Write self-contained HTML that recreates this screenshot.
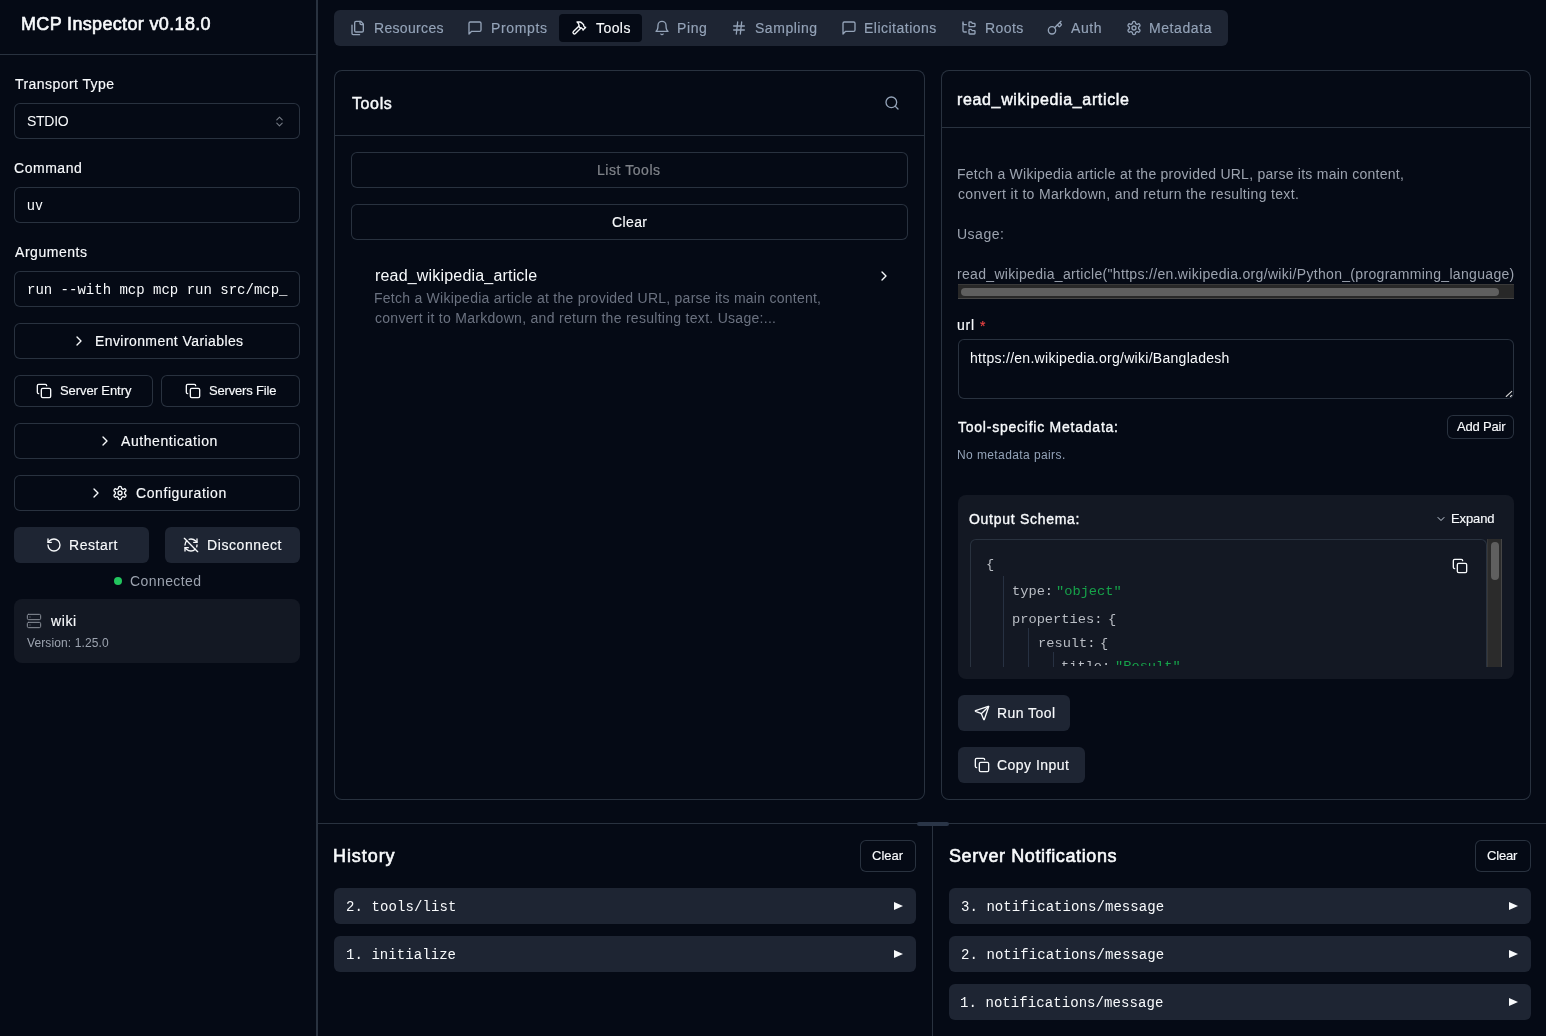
<!DOCTYPE html>
<html><head><meta charset="utf-8"><title>MCP Inspector</title>
<style>
html,body{margin:0;padding:0;}
body{width:1546px;height:1036px;overflow:hidden;background:#050a15;position:relative;font-family:'Liberation Sans', sans-serif;-webkit-font-smoothing:antialiased;}
.t{position:absolute;white-space:pre;will-change:transform;}
.r{position:absolute;box-sizing:border-box;}
.i{position:absolute;overflow:visible;}
.tri{position:absolute;width:0;height:0;border-top:4.6px solid transparent;border-bottom:4.6px solid transparent;border-left:9.5px solid #f8fafc;}
</style></head><body>
<div class="r" style="left:316px;top:0px;width:2px;height:1036px;background:#29323f;border-radius:0px;"></div>
<div class="r" style="left:0px;top:54px;width:316px;height:1px;background:#29323f;border-radius:0px;"></div>
<div class="t " id="t0" style="left:21.40px;top:13.06px;font-size:18px;font-weight:400;color:#f8fafc;font-family:'Liberation Sans', sans-serif;line-height:22px;-webkit-text-stroke:0.6px #f8fafc;letter-spacing:0.341px;">MCP Inspector v0.18.0</div>
<div class="t " id="t1" style="left:15.10px;top:74.75px;font-size:14px;font-weight:400;color:#f8fafc;font-family:'Liberation Sans', sans-serif;line-height:18px;-webkit-text-stroke:0.15px #f8fafc;letter-spacing:0.435px;">Transport Type</div>
<div class="r" style="left:14px;top:103px;width:286px;height:36px;background:#050a15;border-radius:6px;box-shadow:inset 0 0 0 1px #29323f;"></div>
<div class="t " id="t2" style="left:27.10px;top:112.15px;font-size:14px;font-weight:400;color:#f8fafc;font-family:'Liberation Sans', sans-serif;line-height:18px;letter-spacing:-0.272px;">STDIO</div>
<svg class="i" style="left:272.5px;top:114.5px;width:13px;height:13px;opacity:.75" viewBox="0 0 24 24" fill="none" stroke="#9aa0aa" stroke-width="2" stroke-linecap="round" stroke-linejoin="round"><path d="m7 15 5 5 5-5"/><path d="m7 9 5-5 5 5"/></svg>
<div class="t " id="t3" style="left:13.90px;top:159.15px;font-size:14px;font-weight:400;color:#f8fafc;font-family:'Liberation Sans', sans-serif;line-height:18px;-webkit-text-stroke:0.15px #f8fafc;letter-spacing:0.535px;">Command</div>
<div class="r" style="left:14px;top:187px;width:286px;height:36px;background:#050a15;border-radius:6px;box-shadow:inset 0 0 0 1px #29323f;"></div>
<div class="t " id="t4" style="left:26.80px;top:196.15px;font-size:14px;font-weight:400;color:#f8fafc;font-family:'Liberation Sans', sans-serif;line-height:18px;letter-spacing:0.800px;">uv</div>
<div class="t " id="t5" style="left:14.80px;top:242.75px;font-size:14px;font-weight:400;color:#f8fafc;font-family:'Liberation Sans', sans-serif;line-height:18px;-webkit-text-stroke:0.15px #f8fafc;letter-spacing:0.538px;">Arguments</div>
<div class="r" style="left:14px;top:271px;width:286px;height:36px;background:#050a15;border-radius:6px;box-shadow:inset 0 0 0 1px #29323f;"></div>
<div class="t " id="t6" style="left:26.50px;top:280.57px;font-size:14px;font-weight:400;color:#f8fafc;font-family:'Liberation Mono', monospace;line-height:18px;letter-spacing:0.002px;">run --with mcp mcp run src/mcp_</div>
<div class="r" style="left:14px;top:323px;width:286px;height:36px;background:#050a15;border-radius:6px;box-shadow:inset 0 0 0 1px #29323f;"></div>
<svg class="i" style="left:71px;top:333px;width:16px;height:16px;" viewBox="0 0 24 24" fill="none" stroke="#f8fafc" stroke-width="2" stroke-linecap="round" stroke-linejoin="round"><path d="m9 18 6-6-6-6"/></svg>
<div class="t " id="t7" style="left:94.50px;top:331.75px;font-size:14px;font-weight:400;color:#f8fafc;font-family:'Liberation Sans', sans-serif;line-height:18px;-webkit-text-stroke:0.15px #f8fafc;letter-spacing:0.415px;">Environment Variables</div>
<div class="r" style="left:14px;top:375px;width:139px;height:32px;background:#050a15;border-radius:6px;box-shadow:inset 0 0 0 1px #29323f;"></div>
<svg class="i" style="left:36px;top:383px;width:16px;height:16px;" viewBox="0 0 24 24" fill="none" stroke="#f8fafc" stroke-width="2" stroke-linecap="round" stroke-linejoin="round"><rect width="14" height="14" x="8" y="8" rx="2" ry="2"/><path d="M4 16c-1.1 0-2-.9-2-2V4c0-1.1.9-2 2-2h10c1.1 0 2 .9 2 2"/></svg>
<div class="t " id="t8" style="left:59.60px;top:382.90px;font-size:13px;font-weight:400;color:#f8fafc;font-family:'Liberation Sans', sans-serif;line-height:16px;-webkit-text-stroke:0.15px #f8fafc;letter-spacing:-0.077px;">Server Entry</div>
<div class="r" style="left:161px;top:375px;width:139px;height:32px;background:#050a15;border-radius:6px;box-shadow:inset 0 0 0 1px #29323f;"></div>
<svg class="i" style="left:185px;top:383px;width:16px;height:16px;" viewBox="0 0 24 24" fill="none" stroke="#f8fafc" stroke-width="2" stroke-linecap="round" stroke-linejoin="round"><rect width="14" height="14" x="8" y="8" rx="2" ry="2"/><path d="M4 16c-1.1 0-2-.9-2-2V4c0-1.1.9-2 2-2h10c1.1 0 2 .9 2 2"/></svg>
<div class="t " id="t9" style="left:208.70px;top:382.90px;font-size:13px;font-weight:400;color:#f8fafc;font-family:'Liberation Sans', sans-serif;line-height:16px;-webkit-text-stroke:0.15px #f8fafc;letter-spacing:-0.174px;">Servers File</div>
<div class="r" style="left:14px;top:423px;width:286px;height:36px;background:#050a15;border-radius:6px;box-shadow:inset 0 0 0 1px #29323f;"></div>
<svg class="i" style="left:97px;top:433px;width:16px;height:16px;" viewBox="0 0 24 24" fill="none" stroke="#f8fafc" stroke-width="2" stroke-linecap="round" stroke-linejoin="round"><path d="m9 18 6-6-6-6"/></svg>
<div class="t " id="t10" style="left:121.20px;top:432.05px;font-size:14px;font-weight:400;color:#f8fafc;font-family:'Liberation Sans', sans-serif;line-height:18px;-webkit-text-stroke:0.15px #f8fafc;letter-spacing:0.581px;">Authentication</div>
<div class="r" style="left:14px;top:475px;width:286px;height:36px;background:#050a15;border-radius:6px;box-shadow:inset 0 0 0 1px #29323f;"></div>
<svg class="i" style="left:88px;top:485px;width:16px;height:16px;" viewBox="0 0 24 24" fill="none" stroke="#f8fafc" stroke-width="2" stroke-linecap="round" stroke-linejoin="round"><path d="m9 18 6-6-6-6"/></svg>
<svg class="i" style="left:112px;top:485px;width:16px;height:16px;" viewBox="0 0 24 24" fill="none" stroke="#f8fafc" stroke-width="2" stroke-linecap="round" stroke-linejoin="round"><path d="M12.22 2h-.44a2 2 0 0 0-2 2v.18a2 2 0 0 1-1 1.73l-.43.25a2 2 0 0 1-2 0l-.15-.08a2 2 0 0 0-2.73.73l-.22.38a2 2 0 0 0 .73 2.73l.15.1a2 2 0 0 1 1 1.72v.51a2 2 0 0 1-1 1.74l-.15.09a2 2 0 0 0-.73 2.73l.22.38a2 2 0 0 0 2.73.73l.15-.08a2 2 0 0 1 2 0l.43.25a2 2 0 0 1 1 1.73V20a2 2 0 0 0 2 2h.44a2 2 0 0 0 2-2v-.18a2 2 0 0 1 1-1.73l.43-.25a2 2 0 0 1 2 0l.15.08a2 2 0 0 0 2.73-.73l.22-.39a2 2 0 0 0-.73-2.73l-.15-.08a2 2 0 0 1-1-1.74v-.5a2 2 0 0 1 1-1.74l.15-.09a2 2 0 0 0 .73-2.73l-.22-.38a2 2 0 0 0-2.73-.73l-.15.08a2 2 0 0 1-2 0l-.43-.25a2 2 0 0 1-1-1.73V4a2 2 0 0 0-2-2z"/><circle cx="12" cy="12" r="3"/></svg>
<div class="t " id="t11" style="left:136.10px;top:483.95px;font-size:14px;font-weight:400;color:#f8fafc;font-family:'Liberation Sans', sans-serif;line-height:18px;-webkit-text-stroke:0.15px #f8fafc;letter-spacing:0.576px;">Configuration</div>
<div class="r" style="left:14px;top:527px;width:135px;height:36px;background:#1e2533;border-radius:6px;"></div>
<svg class="i" style="left:46px;top:537px;width:16px;height:16px;" viewBox="0 0 24 24" fill="none" stroke="#f8fafc" stroke-width="2" stroke-linecap="round" stroke-linejoin="round"><path d="M3 12a9 9 0 1 0 9-9 9.75 9.75 0 0 0-6.74 2.74L3 8"/><path d="M3 3v5h5"/></svg>
<div class="t " id="t12" style="left:68.70px;top:536.15px;font-size:14px;font-weight:400;color:#f8fafc;font-family:'Liberation Sans', sans-serif;line-height:18px;-webkit-text-stroke:0.15px #f8fafc;letter-spacing:0.544px;">Restart</div>
<div class="r" style="left:165px;top:527px;width:135px;height:36px;background:#1e2533;border-radius:6px;"></div>
<svg class="i" style="left:183px;top:537px;width:16px;height:16px;" viewBox="0 0 24 24" fill="none" stroke="#f8fafc" stroke-width="2" stroke-linecap="round" stroke-linejoin="round"><path d="M21 8L18.74 5.74A9.75 9.75 0 0 0 12 3C11 3 10.03 3.16 9.13 3.47"/><path d="M8 16H3v5"/><path d="M3 12C3 9.51 4 7.26 5.64 5.64"/><path d="m3 16 2.26 2.26A9.75 9.75 0 0 0 12 21c2.49 0 4.74-1 6.36-2.64"/><path d="M21 12c0 1-.16 1.97-.47 2.87"/><path d="M21 3v5h-5"/><path d="M22 22 2 2"/></svg>
<div class="t " id="t13" style="left:206.70px;top:536.15px;font-size:14px;font-weight:400;color:#f8fafc;font-family:'Liberation Sans', sans-serif;line-height:18px;-webkit-text-stroke:0.15px #f8fafc;letter-spacing:0.582px;">Disconnect</div>
<div class="r" style="left:114px;top:577px;width:8px;height:8px;background:#22c55e;border-radius:4px;"></div>
<div class="t " id="t14" style="left:129.80px;top:572.15px;font-size:14px;font-weight:400;color:#9ca3af;font-family:'Liberation Sans', sans-serif;line-height:18px;letter-spacing:0.421px;">Connected</div>
<div class="r" style="left:14px;top:599px;width:286px;height:64px;background:#131823;border-radius:8px;"></div>
<svg class="i" style="left:25.5px;top:613px;width:16px;height:16px;" viewBox="0 0 24 24" fill="none" stroke="#8b919b" stroke-width="1.5" stroke-linecap="round" stroke-linejoin="round"><rect width="20" height="8" x="2" y="2" rx="2" ry="2"/><rect width="20" height="8" x="2" y="14" rx="2" ry="2"/><line x1="6" x2="6.01" y1="6" y2="6"/><line x1="6" x2="6.01" y1="18" y2="18"/></svg>
<div class="t " id="t15" style="left:51.10px;top:612.15px;font-size:14px;font-weight:400;color:#f8fafc;font-family:'Liberation Sans', sans-serif;line-height:18px;-webkit-text-stroke:0.15px #f8fafc;letter-spacing:0.593px;">wiki</div>
<div class="t " id="t16" style="left:26.60px;top:636.14px;font-size:12px;font-weight:400;color:#9ca3af;font-family:'Liberation Sans', sans-serif;line-height:15px;letter-spacing:0.116px;">Version: 1.25.0</div>
<div class="r" style="left:334px;top:10px;width:894px;height:36px;background:#1e2533;border-radius:6px;"></div>
<svg class="i" style="left:349.7px;top:20px;width:16px;height:16px;" viewBox="0 0 24 24" fill="none" stroke="#94a3b8" stroke-width="2" stroke-linecap="round" stroke-linejoin="round"><path d="M20 7h-3a2 2 0 0 1-2-2V2"/><path d="M9 18a2 2 0 0 1-2-2V4a2 2 0 0 1 2-2h7l4 4v10a2 2 0 0 1-2 2Z"/><path d="M3 7.6v12.8A1.6 1.6 0 0 0 4.6 22h9.8"/></svg>
<div class="t " id="t17" style="left:373.60px;top:19.15px;font-size:14px;font-weight:400;color:#94a3b8;font-family:'Liberation Sans', sans-serif;line-height:18px;-webkit-text-stroke:0.15px #94a3b8;letter-spacing:0.323px;">Resources</div>
<svg class="i" style="left:467px;top:20px;width:16px;height:16px;" viewBox="0 0 24 24" fill="none" stroke="#94a3b8" stroke-width="2" stroke-linecap="round" stroke-linejoin="round"><path d="M21 15a2 2 0 0 1-2 2H7l-4 4V5a2 2 0 0 1 2-2h14a2 2 0 0 1 2 2z"/></svg>
<div class="t " id="t18" style="left:490.90px;top:19.15px;font-size:14px;font-weight:400;color:#94a3b8;font-family:'Liberation Sans', sans-serif;line-height:18px;-webkit-text-stroke:0.15px #94a3b8;letter-spacing:0.629px;">Prompts</div>
<div class="r" style="left:559px;top:14px;width:83px;height:28px;background:#050a15;border-radius:4px;"></div>
<svg class="i" style="left:571px;top:20px;width:16px;height:16px;" viewBox="0 0 24 24" fill="none" stroke="#f8fafc" stroke-width="2" stroke-linecap="round" stroke-linejoin="round"><path d="m15 12-8.373 8.373a1 1 0 1 1-3-3L12 9"/><path d="m18 15 4-4"/><path d="m21.5 11.5-1.914-1.914A2 2 0 0 1 19 8.172V7l-2.26-2.26a6 6 0 0 0-4.202-1.756L9 2.96l.92.82A6.18 6.18 0 0 1 12 8.4V10l2 2h1.172a2 2 0 0 1 1.414.586L18.5 14.5"/></svg>
<div class="t " id="t19" style="left:595.70px;top:19.15px;font-size:14px;font-weight:400;color:#f8fafc;font-family:'Liberation Sans', sans-serif;line-height:18px;-webkit-text-stroke:0.15px #f8fafc;letter-spacing:0.429px;">Tools</div>
<svg class="i" style="left:653.5px;top:20px;width:16px;height:16px;" viewBox="0 0 24 24" fill="none" stroke="#94a3b8" stroke-width="2" stroke-linecap="round" stroke-linejoin="round"><path d="M6 8a6 6 0 0 1 12 0c0 7 3 9 3 9H3s3-2 3-9"/><path d="M10.3 21a1.94 1.94 0 0 0 3.4 0"/></svg>
<div class="t " id="t20" style="left:677.40px;top:19.15px;font-size:14px;font-weight:400;color:#94a3b8;font-family:'Liberation Sans', sans-serif;line-height:18px;-webkit-text-stroke:0.15px #94a3b8;letter-spacing:0.622px;">Ping</div>
<svg class="i" style="left:730.7px;top:20px;width:16px;height:16px;" viewBox="0 0 24 24" fill="none" stroke="#94a3b8" stroke-width="2" stroke-linecap="round" stroke-linejoin="round"><line x1="4" x2="20" y1="9" y2="9"/><line x1="4" x2="20" y1="15" y2="15"/><line x1="10" x2="8" y1="3" y2="21"/><line x1="16" x2="14" y1="3" y2="21"/></svg>
<div class="t " id="t21" style="left:755.10px;top:19.15px;font-size:14px;font-weight:400;color:#94a3b8;font-family:'Liberation Sans', sans-serif;line-height:18px;-webkit-text-stroke:0.15px #94a3b8;letter-spacing:0.532px;">Sampling</div>
<svg class="i" style="left:841.3px;top:20px;width:16px;height:16px;" viewBox="0 0 24 24" fill="none" stroke="#94a3b8" stroke-width="2" stroke-linecap="round" stroke-linejoin="round"><path d="M21 15a2 2 0 0 1-2 2H7l-4 4V5a2 2 0 0 1 2-2h14a2 2 0 0 1 2 2z"/></svg>
<div class="t " id="t22" style="left:864.20px;top:19.15px;font-size:14px;font-weight:400;color:#94a3b8;font-family:'Liberation Sans', sans-serif;line-height:18px;-webkit-text-stroke:0.15px #94a3b8;letter-spacing:0.489px;">Elicitations</div>
<svg class="i" style="left:960.7px;top:20px;width:16px;height:16px;" viewBox="0 0 24 24" fill="none" stroke="#94a3b8" stroke-width="2" stroke-linecap="round" stroke-linejoin="round"><path d="M20 10a1 1 0 0 0 1-1V6a1 1 0 0 0-1-1h-2.5a1 1 0 0 1-.8-.4l-.9-1.2A1 1 0 0 0 15 3h-2a1 1 0 0 0-1 1v5a1 1 0 0 0 1 1Z"/><path d="M20 21a1 1 0 0 0 1-1v-3a1 1 0 0 0-1-1h-2.9a1 1 0 0 1-.88-.55l-.42-.85a1 1 0 0 0-.92-.6H13a1 1 0 0 0-1 1v5a1 1 0 0 0 1 1Z"/><path d="M3 5a2 2 0 0 0 2 2h3"/><path d="M3 3v13a2 2 0 0 0 2 2h3"/></svg>
<div class="t " id="t23" style="left:984.60px;top:19.15px;font-size:14px;font-weight:400;color:#94a3b8;font-family:'Liberation Sans', sans-serif;line-height:18px;-webkit-text-stroke:0.15px #94a3b8;letter-spacing:0.407px;">Roots</div>
<svg class="i" style="left:1047.4px;top:20px;width:16px;height:16px;" viewBox="0 0 24 24" fill="none" stroke="#94a3b8" stroke-width="2" stroke-linecap="round" stroke-linejoin="round"><path d="m15.5 7.5 2.3 2.3a1 1 0 0 0 1.4 0l2.1-2.1a1 1 0 0 0 0-1.4L19 4"/><path d="m21 2-9.6 9.6"/><circle cx="7.5" cy="15.5" r="5.5"/></svg>
<div class="t " id="t24" style="left:1071.40px;top:19.15px;font-size:14px;font-weight:400;color:#94a3b8;font-family:'Liberation Sans', sans-serif;line-height:18px;-webkit-text-stroke:0.15px #94a3b8;letter-spacing:0.562px;">Auth</div>
<svg class="i" style="left:1126px;top:20px;width:16px;height:16px;" viewBox="0 0 24 24" fill="none" stroke="#94a3b8" stroke-width="2" stroke-linecap="round" stroke-linejoin="round"><path d="M12.22 2h-.44a2 2 0 0 0-2 2v.18a2 2 0 0 1-1 1.73l-.43.25a2 2 0 0 1-2 0l-.15-.08a2 2 0 0 0-2.73.73l-.22.38a2 2 0 0 0 .73 2.73l.15.1a2 2 0 0 1 1 1.72v.51a2 2 0 0 1-1 1.74l-.15.09a2 2 0 0 0-.73 2.73l.22.38a2 2 0 0 0 2.73.73l.15-.08a2 2 0 0 1 2 0l.43.25a2 2 0 0 1 1 1.73V20a2 2 0 0 0 2 2h.44a2 2 0 0 0 2-2v-.18a2 2 0 0 1 1-1.73l.43-.25a2 2 0 0 1 2 0l.15.08a2 2 0 0 0 2.73-.73l.22-.39a2 2 0 0 0-.73-2.73l-.15-.08a2 2 0 0 1-1-1.74v-.5a2 2 0 0 1 1-1.74l.15-.09a2 2 0 0 0 .73-2.73l-.22-.38a2 2 0 0 0-2.73-.73l-.15.08a2 2 0 0 1-2 0l-.43-.25a2 2 0 0 1-1-1.73V4a2 2 0 0 0-2-2z"/><circle cx="12" cy="12" r="3"/></svg>
<div class="t " id="t25" style="left:1148.90px;top:19.15px;font-size:14px;font-weight:400;color:#94a3b8;font-family:'Liberation Sans', sans-serif;line-height:18px;-webkit-text-stroke:0.15px #94a3b8;letter-spacing:0.588px;">Metadata</div>
<div class="r" style="left:334px;top:70px;width:591px;height:730px;background:#050a15;border-radius:8px;box-shadow:inset 0 0 0 1px #29323f;"></div>
<div class="r" style="left:335px;top:135px;width:589px;height:1px;background:#29323f;border-radius:0px;"></div>
<div class="t " id="t26" style="left:351.70px;top:93.96px;font-size:16px;font-weight:400;color:#f8fafc;font-family:'Liberation Sans', sans-serif;line-height:20px;-webkit-text-stroke:0.45px #f8fafc;letter-spacing:0.612px;">Tools</div>
<svg class="i" style="left:884px;top:95px;width:16px;height:16px;" viewBox="0 0 24 24" fill="none" stroke="#94a3b8" stroke-width="2" stroke-linecap="round" stroke-linejoin="round"><circle cx="11" cy="11" r="8"/><path d="m21 21-4.3-4.3"/></svg>
<div class="r" style="left:351px;top:152px;width:557px;height:36px;background:#050a15;border-radius:6px;box-shadow:inset 0 0 0 1px #29323f;"></div>
<div class="t " id="t27" style="left:597.40px;top:160.75px;font-size:14px;font-weight:400;color:#f8fafc;font-family:'Liberation Sans', sans-serif;line-height:18px;-webkit-text-stroke:0.15px #f8fafc;letter-spacing:0.549px;opacity:.5">List Tools</div>
<div class="r" style="left:351px;top:204px;width:557px;height:36px;background:#050a15;border-radius:6px;box-shadow:inset 0 0 0 1px #29323f;"></div>
<div class="t " id="t28" style="left:611.80px;top:213.15px;font-size:14px;font-weight:400;color:#f8fafc;font-family:'Liberation Sans', sans-serif;line-height:18px;-webkit-text-stroke:0.15px #f8fafc;letter-spacing:0.377px;">Clear</div>
<div class="t " id="t29" style="left:374.50px;top:266.46px;font-size:16px;font-weight:400;color:#f8fafc;font-family:'Liberation Sans', sans-serif;line-height:20px;letter-spacing:0.185px;">read_wikipedia_article</div>
<div class="t " id="t30" style="left:373.90px;top:289.15px;font-size:14px;font-weight:400;color:#6b7280;font-family:'Liberation Sans', sans-serif;line-height:18px;letter-spacing:0.253px;">Fetch a Wikipedia article at the provided URL, parse its main content,</div>
<div class="t " id="t31" style="left:374.50px;top:308.95px;font-size:14px;font-weight:400;color:#6b7280;font-family:'Liberation Sans', sans-serif;line-height:18px;letter-spacing:0.288px;">convert it to Markdown, and return the resulting text. Usage:...</div>
<svg class="i" style="left:876px;top:268px;width:16px;height:16px;" viewBox="0 0 24 24" fill="none" stroke="#f8fafc" stroke-width="2" stroke-linecap="round" stroke-linejoin="round"><path d="m9 18 6-6-6-6"/></svg>
<div class="r" style="left:941px;top:70px;width:590px;height:730px;background:#050a15;border-radius:8px;box-shadow:inset 0 0 0 1px #29323f;"></div>
<div class="r" style="left:942px;top:127px;width:588px;height:1px;background:#29323f;border-radius:0px;"></div>
<div class="t " id="t32" style="left:957.10px;top:90.26px;font-size:16px;font-weight:400;color:#f8fafc;font-family:'Liberation Sans', sans-serif;line-height:20px;-webkit-text-stroke:0.45px #f8fafc;letter-spacing:0.647px;">read_wikipedia_article</div>
<div class="t " id="t33" style="left:956.90px;top:164.95px;font-size:14px;font-weight:400;color:#9ca3af;font-family:'Liberation Sans', sans-serif;line-height:18px;letter-spacing:0.250px;">Fetch a Wikipedia article at the provided URL, parse its main content,</div>
<div class="t " id="t34" style="left:957.50px;top:184.95px;font-size:14px;font-weight:400;color:#9ca3af;font-family:'Liberation Sans', sans-serif;line-height:18px;letter-spacing:0.337px;">convert it to Markdown, and return the resulting text.</div>
<div class="t " id="t35" style="left:957.00px;top:225.15px;font-size:14px;font-weight:400;color:#9ca3af;font-family:'Liberation Sans', sans-serif;line-height:18px;letter-spacing:0.506px;">Usage:</div>
<div class="t " id="t36" style="left:957.10px;top:265.15px;font-size:14px;font-weight:400;color:#9ca3af;font-family:'Liberation Sans', sans-serif;line-height:18px;letter-spacing:0.320px;">read_wikipedia_article("https://en.wikipedia.org/wiki/Python_(programming_language)</div>
<div class="r" style="left:958px;top:284px;width:556px;height:15px;background:#282828;border-radius:0px;box-shadow:inset 0 1px 0 #393939, inset 0 -1px 0 #464646;"></div>
<div class="r" style="left:961px;top:288px;width:538px;height:8px;background:#5f5f5f;border-radius:4px;"></div>
<div class="t " id="t37" style="left:957.10px;top:316.15px;font-size:14px;font-weight:400;color:#f8fafc;font-family:'Liberation Sans', sans-serif;line-height:18px;-webkit-text-stroke:0.15px #f8fafc;letter-spacing:0.800px;">url</div>
<div class="t " id="t38" style="left:980.00px;top:316.95px;font-size:14px;font-weight:400;color:#ef4444;font-family:'Liberation Sans', sans-serif;line-height:18px;-webkit-text-stroke:0.15px #ef4444;">*</div>
<div class="r" style="left:958px;top:339px;width:556px;height:60px;background:#050a15;border-radius:6px;box-shadow:inset 0 0 0 1px #29323f;"></div>
<svg class="i" style="left:1500px;top:385px;width:15px;height:15px" viewBox="0 0 15 15" stroke="#d4d4d4" stroke-width="1.1" stroke-linecap="round"><path d="M6.2 11.5L11.7 6.4M10.4 11.5L11.7 10.3"/></svg>
<div class="t " id="t39" style="left:970.10px;top:349.45px;font-size:14px;font-weight:400;color:#f8fafc;font-family:'Liberation Sans', sans-serif;line-height:18px;letter-spacing:0.285px;">https://en.wikipedia.org/wiki/Bangladesh</div>
<div class="t " id="t40" style="left:957.90px;top:418.35px;font-size:14px;font-weight:400;color:#f8fafc;font-family:'Liberation Sans', sans-serif;line-height:18px;-webkit-text-stroke:0.35px #f8fafc;letter-spacing:0.764px;">Tool-specific Metadata:</div>
<div class="r" style="left:1447px;top:415px;width:67px;height:24px;background:#050a15;border-radius:6px;box-shadow:inset 0 0 0 1px #29323f;"></div>
<div class="t " id="t41" style="left:1456.60px;top:419.10px;font-size:13px;font-weight:400;color:#f8fafc;font-family:'Liberation Sans', sans-serif;line-height:16px;-webkit-text-stroke:0.15px #f8fafc;letter-spacing:-0.190px;">Add Pair</div>
<div class="t " id="t42" style="left:957.10px;top:447.64px;font-size:12px;font-weight:400;color:#94a3b8;font-family:'Liberation Sans', sans-serif;line-height:15px;letter-spacing:0.403px;">No metadata pairs.</div>
<div class="r" style="left:958px;top:495px;width:556px;height:184px;background:#131823;border-radius:8px;"></div>
<div class="t " id="t43" style="left:969.20px;top:510.15px;font-size:14px;font-weight:400;color:#f8fafc;font-family:'Liberation Sans', sans-serif;line-height:18px;-webkit-text-stroke:0.35px #f8fafc;letter-spacing:0.717px;">Output Schema:</div>
<svg class="i" style="left:1435px;top:513px;width:12px;height:12px;" viewBox="0 0 24 24" fill="none" stroke="#cbd5e1" stroke-width="2" stroke-linecap="round" stroke-linejoin="round"><path d="m6 9 6 6 6-6"/></svg>
<div class="t " id="t44" style="left:1450.70px;top:510.50px;font-size:13px;font-weight:400;color:#f8fafc;font-family:'Liberation Sans', sans-serif;line-height:16px;-webkit-text-stroke:0.15px #f8fafc;letter-spacing:-0.112px;">Expand</div>
<div class="r" style="left:970px;top:539px;width:517px;height:128px;background:#131823;border-radius:0px;border:1px solid #29323f;border-bottom:none;border-radius:6px 6px 0 0;"></div>
<div class="r" style="left:1487px;top:539px;width:15px;height:128px;background:#2b2b2b;border-radius:0px;box-shadow:inset 1px 0 0 #383838, inset -1px 0 0 #464646;"></div>
<div class="r" style="left:1491px;top:542px;width:8px;height:38px;background:#5f5f5f;border-radius:4px;"></div>
<svg class="i" style="left:1452px;top:558px;width:16px;height:16px;" viewBox="0 0 24 24" fill="none" stroke="#f8fafc" stroke-width="2" stroke-linecap="round" stroke-linejoin="round"><rect width="14" height="14" x="8" y="8" rx="2" ry="2"/><path d="M4 16c-1.1 0-2-.9-2-2V4c0-1.1.9-2 2-2h10c1.1 0 2 .9 2 2"/></svg>
<div class="t " id="t45" style="left:986.10px;top:556.35px;font-size:13.7px;font-weight:400;color:#b9bdc4;font-family:'Liberation Mono', monospace;line-height:17px;">{</div>
<div class="t " id="t46" style="left:1012.00px;top:582.85px;font-size:13.7px;font-weight:400;color:#b9bdc4;font-family:'Liberation Mono', monospace;line-height:17px;">type:</div>
<div class="t " id="t47" style="left:1056.00px;top:582.85px;font-size:13.7px;font-weight:400;color:#16a34a;font-family:'Liberation Mono', monospace;line-height:17px;">"object"</div>
<div class="t " id="t48" style="left:1012.00px;top:611.15px;font-size:13.7px;font-weight:400;color:#b9bdc4;font-family:'Liberation Mono', monospace;line-height:17px;">properties:</div>
<div class="t " id="t49" style="left:1108.00px;top:611.15px;font-size:13.7px;font-weight:400;color:#b9bdc4;font-family:'Liberation Mono', monospace;line-height:17px;">{</div>
<div class="t " id="t50" style="left:1038.00px;top:634.55px;font-size:13.7px;font-weight:400;color:#b9bdc4;font-family:'Liberation Mono', monospace;line-height:17px;">result:</div>
<div class="t " id="t51" style="left:1100.00px;top:634.55px;font-size:13.7px;font-weight:400;color:#b9bdc4;font-family:'Liberation Mono', monospace;line-height:17px;">{</div>
<div class="t " id="t52" style="left:1061.00px;top:658.35px;font-size:13.7px;font-weight:400;color:#b9bdc4;font-family:'Liberation Mono', monospace;line-height:17px;clip-path:inset(0 0 9px 0);">title:</div>
<div class="t " id="t53" style="left:1114.50px;top:658.35px;font-size:13.7px;font-weight:400;color:#16a34a;font-family:'Liberation Mono', monospace;line-height:17px;clip-path:inset(0 0 9px 0);">"Result"</div>
<div class="r" style="left:1003px;top:576px;width:1px;height:91px;background:#273142;border-radius:0px;"></div>
<div class="r" style="left:1028px;top:628px;width:1px;height:39px;background:#273142;border-radius:0px;"></div>
<div class="r" style="left:1053px;top:652px;width:1px;height:15px;background:#273142;border-radius:0px;"></div>
<div class="r" style="left:958px;top:695px;width:112px;height:36px;background:#1e2533;border-radius:6px;"></div>
<svg class="i" style="left:974px;top:705px;width:16px;height:16px;" viewBox="0 0 24 24" fill="none" stroke="#f8fafc" stroke-width="2" stroke-linecap="round" stroke-linejoin="round"><path d="M14.536 21.686a.5.5 0 0 0 .937-.024l6.5-19a.496.496 0 0 0-.635-.635l-19 6.5a.5.5 0 0 0-.024.937l7.93 3.18a2 2 0 0 1 1.112 1.11z"/><path d="m21.854 2.147-10.94 10.939"/></svg>
<div class="t " id="t54" style="left:996.90px;top:703.75px;font-size:14px;font-weight:400;color:#f8fafc;font-family:'Liberation Sans', sans-serif;line-height:18px;-webkit-text-stroke:0.15px #f8fafc;letter-spacing:0.436px;">Run Tool</div>
<div class="r" style="left:958px;top:747px;width:127px;height:36px;background:#1e2533;border-radius:6px;"></div>
<svg class="i" style="left:974px;top:757px;width:16px;height:16px;" viewBox="0 0 24 24" fill="none" stroke="#f8fafc" stroke-width="2" stroke-linecap="round" stroke-linejoin="round"><rect width="14" height="14" x="8" y="8" rx="2" ry="2"/><path d="M4 16c-1.1 0-2-.9-2-2V4c0-1.1.9-2 2-2h10c1.1 0 2 .9 2 2"/></svg>
<div class="t " id="t55" style="left:997.30px;top:755.55px;font-size:14px;font-weight:400;color:#f8fafc;font-family:'Liberation Sans', sans-serif;line-height:18px;-webkit-text-stroke:0.15px #f8fafc;letter-spacing:0.476px;">Copy Input</div>
<div class="r" style="left:318px;top:823px;width:1228px;height:1px;background:#29323f;border-radius:0px;"></div>
<div class="r" style="left:917px;top:822px;width:32px;height:4px;background:#2a3547;border-radius:2px;"></div>
<div class="r" style="left:932px;top:826px;width:1px;height:210px;background:#29323f;border-radius:0px;"></div>
<div class="t " id="t56" style="left:333.30px;top:845.16px;font-size:18px;font-weight:400;color:#f8fafc;font-family:'Liberation Sans', sans-serif;line-height:22px;-webkit-text-stroke:0.6px #f8fafc;letter-spacing:0.933px;">History</div>
<div class="r" style="left:860px;top:840px;width:56px;height:32px;background:#050a15;border-radius:6px;box-shadow:inset 0 0 0 1px #29323f;"></div>
<div class="t " id="t57" style="left:872.10px;top:847.60px;font-size:13px;font-weight:400;color:#f8fafc;font-family:'Liberation Sans', sans-serif;line-height:16px;-webkit-text-stroke:0.15px #f8fafc;letter-spacing:-0.009px;">Clear</div>
<div class="r" style="left:334px;top:888px;width:582px;height:36px;background:#1e2533;border-radius:6px;"></div>
<div class="t " id="t58" style="left:345.80px;top:898.47px;font-size:14px;font-weight:400;color:#f8fafc;font-family:'Liberation Mono', monospace;line-height:18px;letter-spacing:0.099px;">2. tools/list</div>
<div class="tri" style="left:894px;top:901.5px"></div>
<div class="r" style="left:334px;top:936px;width:582px;height:36px;background:#1e2533;border-radius:6px;"></div>
<div class="t " id="t59" style="left:345.70px;top:946.47px;font-size:14px;font-weight:400;color:#f8fafc;font-family:'Liberation Mono', monospace;line-height:18px;letter-spacing:0.065px;">1. initialize</div>
<div class="tri" style="left:894px;top:949.5px"></div>
<div class="t " id="t60" style="left:948.70px;top:845.16px;font-size:18px;font-weight:400;color:#f8fafc;font-family:'Liberation Sans', sans-serif;line-height:22px;-webkit-text-stroke:0.6px #f8fafc;letter-spacing:0.602px;">Server Notifications</div>
<div class="r" style="left:1475px;top:840px;width:56px;height:32px;background:#050a15;border-radius:6px;box-shadow:inset 0 0 0 1px #29323f;"></div>
<div class="t " id="t61" style="left:1487.20px;top:847.60px;font-size:13px;font-weight:400;color:#f8fafc;font-family:'Liberation Sans', sans-serif;line-height:16px;-webkit-text-stroke:0.15px #f8fafc;letter-spacing:-0.184px;">Clear</div>
<div class="r" style="left:949px;top:888px;width:582px;height:36px;background:#1e2533;border-radius:6px;"></div>
<div class="t " id="t62" style="left:960.60px;top:898.47px;font-size:14px;font-weight:400;color:#f8fafc;font-family:'Liberation Mono', monospace;line-height:18px;letter-spacing:0.064px;">3. notifications/message</div>
<div class="tri" style="left:1509px;top:901.5px"></div>
<div class="r" style="left:949px;top:936px;width:582px;height:36px;background:#1e2533;border-radius:6px;"></div>
<div class="t " id="t63" style="left:960.50px;top:946.47px;font-size:14px;font-weight:400;color:#f8fafc;font-family:'Liberation Mono', monospace;line-height:18px;letter-spacing:0.068px;">2. notifications/message</div>
<div class="tri" style="left:1509px;top:949.5px"></div>
<div class="r" style="left:949px;top:984px;width:582px;height:36px;background:#1e2533;border-radius:6px;"></div>
<div class="t " id="t64" style="left:960.40px;top:994.47px;font-size:14px;font-weight:400;color:#f8fafc;font-family:'Liberation Mono', monospace;line-height:18px;letter-spacing:0.073px;">1. notifications/message</div>
<div class="tri" style="left:1509px;top:997.5px"></div>
</body></html>
